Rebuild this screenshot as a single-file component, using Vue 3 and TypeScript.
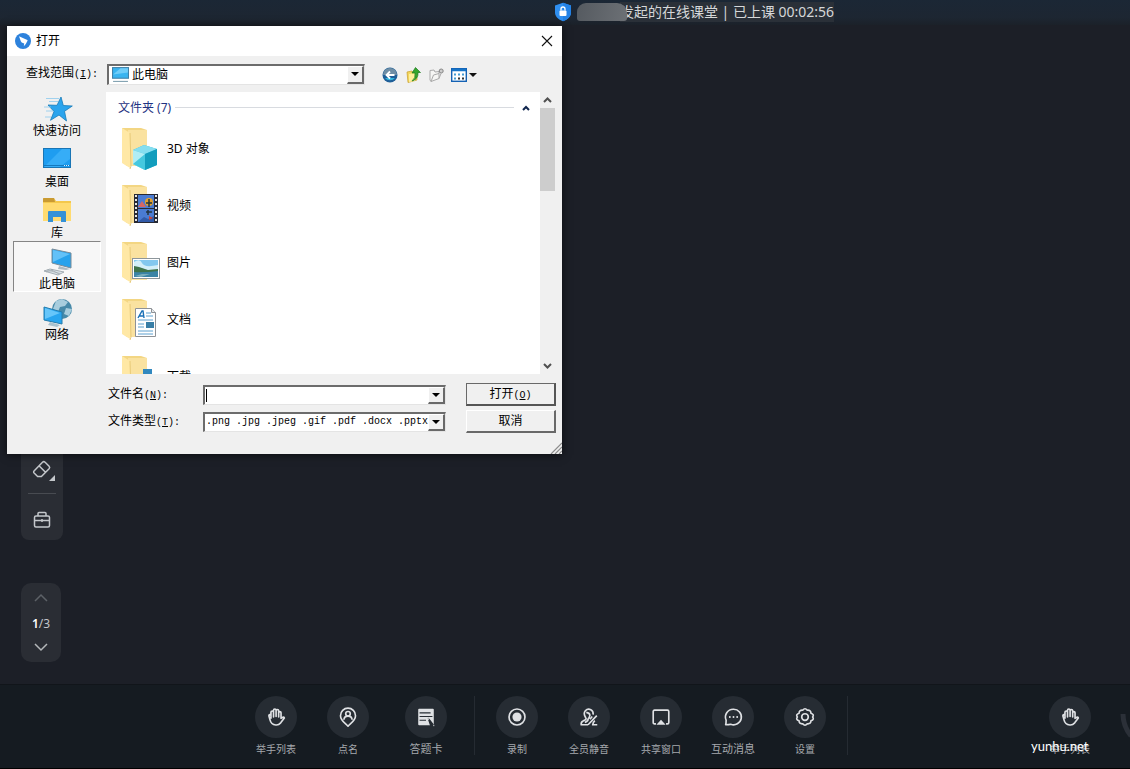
<script setup lang="ts">
import { ref } from 'vue'

interface Item { id: string; label: string; large?: boolean }

const places: Item[] = [
  { id: 'quick', label: '快速访问' },
  { id: 'desktop', label: '桌面' },
  { id: 'library', label: '库' },
  { id: 'pc', label: '此电脑' },
  { id: 'network', label: '网络' },
]
const folders: Item[] = [
  { id: 'objects', label: '3D 对象' },
  { id: 'video', label: '视频' },
  { id: 'picture', label: '图片' },
  { id: 'document', label: '文档' },
  { id: 'download', label: '下载' },
]
const groups: Item[][] = [
  [
    { id: 'hand', label: '举手列表' },
    { id: 'rollcall', label: '点名' },
    { id: 'card', label: '答题卡', large: true },
  ],
  [
    { id: 'record', label: '录制' },
    { id: 'mute', label: '全员静音' },
    { id: 'share', label: '共享窗口' },
    { id: 'chat', label: '互动消息', large: true },
    { id: 'settings', label: '设置' },
  ],
]
const activePlace = ref('pc')
const fileName = ref('')
</script>

<template>
  <div class="classroom">
    <header class="topbar">
      <svg class="shield" viewBox="0 0 18 20" aria-hidden="true">
        <path d="M9 .8 17 3.600v7c0 4-3.200 6.900-8 8.700-4.800-1.800-8-4.700-8-8.700v-7z" fill="#2f8ff0" />
        <path d="M9 .8 17 3.600v7c0 4-3.200 6.900-8 8.700z" fill="#2382e6" />
        <rect x="5.500" y="8.500" width="7" height="5.500" rx="1" fill="#fff" />
        <path d="M7 8.500V7a2 2 0 0 1 4 0v1.500" fill="none" stroke="#fff" stroke-width="1.300" />
      </svg>
      <span class="mask"></span>
      <h1 class="title">发起的在线课堂 | 已上课 00:02:56</h1>
    </header>

    <main class="stage">
      <div class="tools">
        <button class="tool" aria-label="橡皮擦">
          <svg viewBox="0 0 32 32" fill="none" stroke="#c4c7cb" stroke-width="1.500" stroke-linejoin="round">
            <path d="M8.500 17.500 16.500 9.200q1.300-1.200 2.600 0l4 4q1.200 1.300 0 2.600l-7.700 7.700h-3.800l-3.500-3.500q-1.100-1.200.4-2.500zM13 12.800l7 7" />
            <path d="M29 22v6h-6z" fill="#c4c7cb" stroke="none" />
          </svg>
        </button>
        <i class="rule"></i>
        <button class="tool" aria-label="工具箱">
          <svg viewBox="0 0 32 32" fill="none" stroke="#c4c7cb" stroke-width="1.500" stroke-linejoin="round">
            <rect x="8.500" y="12" width="15" height="11" rx="1.500" />
            <path d="M12 12V9.500q0-1 1-1h6q1 0 1 1V12M8.500 16.500h15M16 15v3" />
          </svg>
        </button>
      </div>
      <nav class="pager" aria-label="翻页">
        <button class="turn dim" aria-label="上一页"><svg viewBox="0 0 16 10"><path d="m2 8 6-6 6 6" /></svg></button>
        <span class="page"><b>1</b>/3</span>
        <button class="turn" aria-label="下一页"><svg viewBox="0 0 16 10"><path d="m2 2 6 6 6-6" /></svg></button>
      </nav>
    </main>

    <footer class="dock">
      <div v-for="(group, g) in groups" :key="g" class="group">
        <button v-for="item in group" :key="item.id" class="action" :class="[item.id, { large: item.large }]">
          <span class="disc">
            <svg viewBox="0 0 24 24" aria-hidden="true">
              <template v-if="item.id === 'hand'">
                <path d="M6.500 14V6.800a1.400 1.400 0 0 1 2.800 0V12 4.700a1.400 1.400 0 0 1 2.800 0V11.500 5.200a1.400 1.400 0 0 1 2.800 0V12 7.500a1.300 1.300 0 0 1 2.600 0V13.500l2-1.300q1.500-.7 1.600 1l-4 5.200q-2.200 2.600-5.300 2.300-5.300-.5-6.200-5.200L4.300 11q-.2-1.600 1.100-1.700 1 0 1.100 1.200" />
              </template>
              <template v-else-if="item.id === 'rollcall'">
                <path d="M12 22C9.500 19 3.800 16 3.800 10.500a8.200 8.200 0 0 1 16.400 0c0 5.500-5.700 8.500-8.200 11.500z" />
                <circle cx="12" cy="8.500" r="2.500" /><path d="M7.500 15q.3-4 4.500-4t4.500 4" />
              </template>
              <template v-else-if="item.id === 'card'">
                <rect x="3.500" y="3" width="17" height="18" rx="1" fill="currentColor" stroke="none" />
                <path d="M5 7.500h12M5 11.500h14M5 15.500h7" stroke="#262c33" stroke-width="1.200" />
                <path d="m14.500 13.500 7 9h-4z" fill="#262c33" stroke="#262c33" stroke-width="1.500" />
                <path d="m12.500 12.500 3 1.200-1.500 1.600zM20.500 20.500v1.500" stroke="#dfe1e4" stroke-width="1" />
              </template>
              <template v-else-if="item.id === 'record'">
                <circle cx="12" cy="12" r="8.700" /><circle cx="12" cy="12" r="5" fill="currentColor" stroke="none" />
              </template>
              <template v-else-if="item.id === 'mute'">
                <path d="M11 20.500H3.500q-.5-3 2-4.200l2.500-1.300q1.500-1 .3-2.500-2.800-4.300-.3-7.300Q10.500 2.500 14 4q3 1.500 2.500 5.500M9 7q3.500.5 4 3-.5 3-2 4 .5 2-3.500 4M20.500 10.500l-9.500 10M18.500 16q-2 1-2.500 4.500h5M15.500 11.500l-2.500 3" />
              </template>
              <template v-else-if="item.id === 'share'">
                <path d="M6.500 19.500H5q-1.500 0-1.500-1.500V6Q3.500 4.500 5 4.500h14q1.500 0 1.500 1.500v12q0 1.500-1.500 1.500h-1.500" /><path d="m12 15 5 5.500H7z" fill="currentColor" stroke="none" />
              </template>
              <template v-else-if="item.id === 'chat'">
                <path d="M12.500 3.500a8.500 8.500 0 1 1-3 16.400q-1.500.6-5.500.6.500-2 .5-5A8.500 8.500 0 0 1 12.500 3.500z" /><path d="M8.500 12h.1M12.500 12h.1M16.500 12h.1" stroke-linecap="round" stroke-width="2" />
              </template>
              <template v-else>
                <path d="M9.500 4.600Q12 1.500 14.500 4.600 18.500 4.200 18.500 7.900 22.500 9.500 20.300 12 22.500 14.500 18.500 16.100 18.500 19.800 14.500 19.400 12 22.500 9.500 19.400 5.500 19.800 5.500 16.100 1.500 14.500 3.700 12 1.500 9.500 5.500 7.900 5.500 4.200 9.500 4.600z" /><circle cx="12" cy="12" r="3.600" />
              </template>
            </svg>
          </span>
          <span class="caption">{{ item.label }}</span>
        </button>
      </div>
      <button class="action last">
        <span class="disc">
          <svg viewBox="0 0 24 24" aria-hidden="true">
            <path d="M6.500 14V6.800a1.400 1.400 0 0 1 2.800 0V12 4.700a1.400 1.400 0 0 1 2.800 0V11.500 5.200a1.400 1.400 0 0 1 2.800 0V12 7.500a1.300 1.300 0 0 1 2.600 0V13.500l2-1.300q1.500-.7 1.600 1l-4 5.200q-2.200 2.600-5.300 2.300-5.300-.5-6.200-5.200L4.300 11q-.2-1.600 1.100-1.700 1 0 1.100 1.200" />
          </svg>
        </span>
        <span class="caption">举手列表</span>
        <span class="watermark">yunhu.net</span>
      </button>
      <span class="edge"><svg viewBox="0 0 10 30"><path d="M3 4q0 12 8 22" fill="none" stroke="#2b3038" stroke-width="5" /></svg></span>
    </footer>

    <section class="dialog" role="dialog" aria-labelledby="dialog-title">
      <div class="titlebar">
        <svg class="brand" viewBox="0 0 16 16" aria-hidden="true"><circle cx="8" cy="8" r="8" fill="#2d82dc" /><path d="M4 3.200 12.300 7q.5.300.2.800L10.800 11l-2 2.200.4-2.700-2.500-1q-1-1-1.500-3z" fill="#fff" /></svg>
        <h2 id="dialog-title">打开</h2>
        <button class="close" aria-label="关闭"><svg viewBox="0 0 12 12"><path d="m1 1 10 10M11 1 1 11" stroke="#111" stroke-width="1.100" /></svg></button>
      </div>

      <div class="lookin">
        <label for="look">查找范围<span class="key">(<u>I</u>):</span></label>
        <div class="combo">
          <svg class="monitor" viewBox="0 0 16 16" aria-hidden="true"><rect x=".5" y="1.500" width="15" height="10" fill="#39b4f0" stroke="#4081a8" /><path d="m1 8 7-6h7v4z" fill="#70cdf8" /><path d="M1 14.500h14" stroke="#7d9eae" /></svg>
          <select id="look"><option>此电脑</option></select>
          <span class="drop"></span>
        </div>
        <div class="nav">
          <button aria-label="后退">
            <svg viewBox="0 0 16 16"><circle cx="8" cy="8" r="7.500" fill="#1f5f98" /><path d="M1 8a7 7 0 0 1 14 0z" fill="#6f8ea5" /><path d="M3 11a6 5 0 0 0 10 0z" fill="#35b8df" /><path d="M12.500 8H4.500M8 4.500 4.500 8 8 11.500" fill="none" stroke="#fff" stroke-width="1.800" /></svg>
          </button>
          <button aria-label="向上一级">
            <svg viewBox="0 0 16 16"><path d="m2 5 5-1 1 2 4-.5V13l-9 2.500z" fill="#f3d65c" stroke="#c79d2b" stroke-width=".7" /><path d="m4 7 6-1v8l-6 1z" fill="#ffef9b" /><path d="M7 14q4-3 3-8H7L10.500.5l5 5H13Q13.500 12 7 14z" fill="#35a52e" stroke="#1d7b1d" stroke-width=".7" /></svg>
          </button>
          <button aria-label="新建文件夹">
            <svg viewBox="0 0 16 16"><path d="M2 3.500 6 3l1 2 4-.5v7l-8 3-1-1.500zM3 14.500 5.500 8l5.500-1.500" fill="#f6f6f4" stroke="#aaa" /><path d="m11 11.500 2-5" stroke="#aaa" /><circle cx="13.200" cy="4" r="2" fill="#ccc" stroke="#858585" /></svg>
          </button>
          <button class="view" aria-label="查看菜单">
            <svg viewBox="0 0 26 16"><rect x=".7" y="1.700" width="14.600" height="12.600" fill="#fff" stroke="#1462b4" stroke-width="1.400" /><path d="M1 3h14" stroke="#1674c8" stroke-width="2.500" /><path d="M3 7.500h2M7 7.500h2M11 7.500h2M3 11.500h2" stroke="#439bd3" stroke-width="2" /><path d="M7 11.500h2M11 11.500h2" stroke="#333" stroke-width="2" /><path d="M18 6h8l-4 4z" fill="#111" /></svg>
          </button>
        </div>
      </div>

      <div class="browser">
        <nav class="places" aria-label="位置">
          <button v-for="place in places" :key="place.id" class="place" :class="{ active: place.id === activePlace }" @click="activePlace = place.id">
            <svg viewBox="0 0 32 30" aria-hidden="true">
              <template v-if="place.id === 'quick'">
                <path d="m20 3 2.300 8.500 9 .5-7.800 5.300L25.500 27 18 21l-8.500 5.300L13 17.500 7 11l9 .3z" fill="#2ba4ed" stroke="#167bb9" stroke-width=".8" />
                <path d="M5 4.500h13M8 7.500h9M3 13h7M5 17h7M4 23h6" stroke="#8bc9ed" stroke-width=".8" />
              </template>
              <template v-else-if="place.id === 'desktop'">
                <rect x="2.500" y="3.500" width="27" height="19" fill="#1e9df0" stroke="#1975b5" /><path d="M3 22 21 4h8v10L19 22z" fill="#36adf7" /><path d="M3 20.500h26" stroke="#1679be" /><path d="M23 20.500h5" stroke="#d7efff" stroke-dasharray="1" />
              </template>
              <template v-else-if="place.id === 'library'">
                <path d="M2 3q0-1 1-1h10l2 3h15v20H2z" fill="#f4c84c" /><path d="M2 3q0-1 1-1h10l1 4H2z" fill="#c99a32" /><path d="M2 7h28v18H2z" fill="#ffdb70" /><path d="M7 26V16q0-1 1-1h16q1 0 1 1v10h-5v-5h-8v5z" fill="#3491d6" />
              </template>
              <template v-else-if="place.id === 'pc'">
                <path d="m11 2 19 4v15l-19-5z" fill="#27a2ec" stroke="#7b8c98" /><path d="m12 3 17 4-17 8z" fill="#62c1f8" /><path d="m18 19-1 3 8 1 4-1" fill="#adbac2" /><path d="m3 24 6-2 14 3-6 3z" fill="#dce3e7" stroke="#929da5" stroke-width=".8" /><path d="m6 23 13 3.500M10 22.500 18 27M5 25l7-2" stroke="#8f999f" stroke-width=".5" />
              </template>
              <template v-else>
                <circle cx="21" cy="11" r="10" fill="#4789a8" /><path d="m15 3 6-2 6 3-3 4-5 1-2 5-5-3zM25 10l6 1-3 7-5-2z" fill="#a8cddd" /><path d="m3 9 18 5v12L3 22z" fill="#28a5ef" stroke="#247cac" /><path d="m4 10 15 5-15 6z" fill="#66c6fa" /><path d="m9 24-2 3 9 2 3-2" fill="#a9c2cf" />
              </template>
            </svg>
            <span>{{ place.label }}</span>
          </button>
        </nav>

        <div class="listing">
          <div class="files">
            <div class="heading"><span>文件夹 (7)</span><i></i><svg viewBox="0 0 10 8"><path d="m2 6 3-3 3 3" fill="none" stroke="#11264e" stroke-width="2" /></svg></div>
            <button v-for="folder in folders" :key="folder.id" class="folder">
              <svg viewBox="0 0 40 48" aria-hidden="true">
                <path d="M2 3h19l6 2v36H7L2 37z" fill="#f3d683" />
                <path d="M8 5h19v36H8z" fill="#fae2a0" />
                <path d="m2 3 8 5v35l-8-5z" fill="#ffe8a5" /><path d="m10 8 1 33-1 3" fill="none" stroke="#e8ca78" />
                <template v-if="folder.id === 'objects'">
                  <path d="m24 20 13 4v16l-12 5-12-6V25z" fill="#32bcd8" /><path d="m24 20 13 4-12 5-12-4z" fill="#85def0" /><path d="m13 25 12 4v16l-12-6z" fill="#b1edf5" /><path d="m25 29 12-5v16l-12 5z" fill="#129dbd" /><path d="m13 39 12-10v16z" fill="#45c8df" />
                </template>
                <template v-else-if="folder.id === 'video'">
                  <rect x="14" y="12" width="24" height="29" fill="#272934" /><path d="M18 13h16v13H18zM18 27h16v13H18z" fill="#4a7bd2" /><path d="M16 13v28M36 13v28" stroke="#e5e5e5" stroke-width="2" stroke-dasharray="2" /><circle cx="29" cy="20" r="4" fill="#e3a12c" /><path d="m18 25 4-6 4 6" fill="#d66663" /><path d="M29 17v8M26 21h6M28 28v5M26 30h6" stroke="#24343f" stroke-width="1.500" /><path d="m18 40 6-5 4 2 6-3v6z" fill="#315aa8" /><path d="m29 34 4 2-4 2z" fill="#c64638" />
                </template>
                <template v-else-if="folder.id === 'picture'">
                  <rect x="12.500" y="19.500" width="27" height="20" fill="#fff" stroke="#8d969b" /><path d="M14 21h24v11H14z" fill="#83c8ef" /><path d="M14 23q6-4 8 1t16 2v6H14z" fill="#d3eff9" /><path d="m14 27 5 1 9 3 10-1v4H14z" fill="#3f744b" /><path d="M14 33q9 1 24-1v6H14z" fill="#3b84a6" /><path d="m15 37 7-2 8 0-9 3z" fill="#7aaebc" />
                </template>
                <template v-else-if="folder.id === 'document'">
                  <path d="M15.500 12.500h16l4 4v24h-20z" fill="#fff" stroke="#8e9297" /><path d="M31.500 12.500v4h4" fill="#e5e9ec" stroke="#8e9297" /><path d="m18 22 4-7h1l1 7m-5-2h4" fill="none" stroke="#176fb6" stroke-width="1.400" /><path d="M26 17h5M26 20h7M18 24h15M18 28h6M18 31h6M18 35h15M18 38h15" stroke="#5da0cf" /><rect x="26" y="26" width="8" height="6" fill="#397ea6" />
                </template>
                <path v-else d="M23 16h9v10h5l-10 11-10-11h6z" fill="#3188bf" />
              </svg>
              <span>{{ folder.label }}</span>
            </button>
          </div>
          <div class="scroll" aria-hidden="true">
            <svg viewBox="0 0 15 16"><path d="m4 10 3.500-3.500L11 10" /></svg>
            <i class="thumb"></i>
            <svg viewBox="0 0 15 16"><path d="m4 6 3.500 3.500L11 6" /></svg>
          </div>
        </div>
      </div>

      <form class="fields" @submit.prevent>
        <label for="name">文件名<span class="key">(<u>N</u>):</span></label>
        <div class="combo"><input id="name" v-model="fileName" type="text" autocomplete="off"><i v-if="!fileName" class="caret"></i><span class="drop"></span></div>
        <button class="push primary" type="submit">打开<span class="key">(<u>O</u>)</span></button>
        <label for="type">文件类型<span class="key">(<u>T</u>):</span></label>
        <div class="combo"><select id="type"><option>.png .jpg .jpeg .gif .pdf .docx .pptx</option></select><span class="drop"></span></div>
        <button class="push" type="button">取消</button>
      </form>
      <svg class="grip" viewBox="0 0 12 12" aria-hidden="true"><path d="M1 12 12 1M5 12l7-7M9 12l3-3" stroke="#8c8c8c" stroke-width="1.200" /></svg>
    </section>
  </div>
</template>

<style>
body { margin: 0; background: #000; }
</style>

<style scoped>
* { box-sizing: border-box; }
button, input, select { font: inherit; color: inherit; margin: 0; padding: 0; border: 0; background: none; border-radius: 0; }
svg { display: block; flex: none; }
h1, h2 { margin: 0; font-weight: 400; }

.classroom { position: relative; min-height: 100vh; display: flex; flex-direction: column; overflow: hidden; background: #1c1f27; border-bottom: 1px solid #000; font: 12px/16px "Noto Sans", "Noto Sans CJK SC", sans-serif; }

.topbar { height: 25px; display: flex; justify-content: center; align-items: center; background: linear-gradient(#1b2735, #1d2632 70%, #1b2129); padding: 0 0 2px 258px; }
.shield { width: 18px; height: 20px; margin-right: 5px; }
.mask { position: relative; z-index: 1; width: 50px; height: 18px; border-radius: 9px 10px 3px 3px; background: linear-gradient(100deg, #555a60, #6c7075); }
.title { margin-left: -7px; font-size: 14px; line-height: 20px; color: #d5d7d9; background: #2a3038; white-space: nowrap; }

.stage { flex: 1; display: flex; flex-direction: column; justify-content: flex-end; align-items: flex-start; gap: 43px; padding: 0 21px 22px; }
.tools { width: 42px; display: flex; flex-direction: column; align-items: center; gap: 8px; padding: 8px 0 4px; border-radius: 8px; background: #2a2d34; }
.tool, .tool svg { width: 32px; height: 32px; }
.rule { width: 28px; height: 1px; margin-bottom: 2px; background: #484b51; }
.pager { width: 40px; height: 79px; display: flex; flex-direction: column; align-items: center; justify-content: space-between; padding: 10px 0; border-radius: 10px; background: #2a2d34; color: #c2c5c9; }
.turn svg { width: 16px; height: 10px; fill: none; stroke: #b4b7ba; stroke-width: 1.500; }
.turn.dim svg { stroke: #5d6167; }
.page { padding-top: 2px; }
.page b { color: #fff; font-weight: 600; }

.dock { position: relative; height: 84px; display: flex; align-items: flex-start; padding: 11px 24px 0 240px; background: #151b21; border-top: 1px solid #11151a; overflow: hidden; }
.group { display: flex; align-items: flex-start; height: 59px; border-right: 1px solid #252b32; padding-right: 6px; }
.group + .group { padding-left: 6px; }
.group:first-child { padding-right: 12px; }
.action { position: relative; width: 72px; display: flex; flex-direction: column; align-items: center; gap: 4px; color: #dfe1e4; }
.action.card { margin-left: 6px; }
.disc { width: 42px; height: 42px; display: grid; place-items: center; border-radius: 50%; background: #262c33; }
.disc svg { width: 22px; height: 22px; fill: none; stroke: currentColor; stroke-width: 1.800; stroke-linejoin: round; }
.caption { font-size: 10px; line-height: 14px; color: #a5a9ad; white-space: nowrap; }
.large .caption { font-size: 11px; }
.last { margin-left: auto; }
.watermark { position: absolute; left: -3px; top: 42px; font: 13px/16px Lato, "Noto Sans", sans-serif; color: #fff; }
.edge { position: absolute; right: 0; top: 25px; }
.edge svg { width: 10px; height: 30px; }

.dialog { position: absolute; left: 7px; top: 26px; width: 555px; background: #f0f0f0; color: #000; font: 12px/16px "Liberation Mono", "Noto Sans CJK SC", monospace; box-shadow: 0 1px 8px #0009; }
.titlebar { height: 30px; display: flex; align-items: center; gap: 5px; padding: 0 9px 0 8px; background: #fff; }
.brand { width: 16px; height: 16px; }
.titlebar h2 { font-size: 12px; padding-top: 2px; }
.close { margin-left: auto; }
.close svg { width: 12px; height: 12px; }

label { white-space: nowrap; }
.key { font-size: 10px; }
.lookin { height: 32px; display: flex; align-items: center; padding: 4px 0 0 19px; }
.lookin label { width: 81px; }
.combo { position: relative; display: flex; align-items: stretch; height: 20px; background: #fff; border: 1px solid #e4e4e4; border-top: 2px solid #6c6c6c; border-left: 2px solid #6c6c6c; }
.lookin .combo { width: 258px; height: 21px; align-items: center; }
.combo select, .combo input { flex: 1; width: 0; min-width: 0; appearance: none; outline: none; }
.lookin select { padding-top: 2px; }
.monitor { width: 17px; height: 17px; margin: 0 3px; }
.drop { width: 17px; align-self: stretch; display: grid; place-items: center; background: #f0f0f0; border: 1px solid #fff; border-right: 2px solid #696969; border-bottom: 2px solid #696969; pointer-events: none; }
.drop::after { content: ""; border: 4px solid transparent; border-top-color: #000; border-bottom: 0; }
.nav { display: flex; align-items: center; gap: 7px; margin-left: 17px; padding-top: 2px; }
.nav button, .nav svg { width: 16px; height: 16px; }
.nav .view, .nav .view svg { width: 26px; }

.browser { display: flex; gap: 5px; padding: 0 7px 0 6px; }
.places { width: 88px; }
.place { display: flex; flex-direction: column; align-items: center; width: 88px; height: 51px; padding-top: 5px; border: 1px solid transparent; }
.place svg { width: 32px; height: 30px; }
.active { background: #f7f7f7; border-color: #858585 #fff #fff #858585; }
.listing { flex: 1; display: flex; height: 282px; margin-top: 4px; background: #fff; font-family: "Noto Sans", "Noto Sans CJK SC", sans-serif; }
.files { flex: 1; overflow: hidden; }
.heading { height: 28px; display: flex; align-items: center; gap: 4px; padding: 3px 9px 0 12px; color: #1f3382; }
.heading i { flex: 1; height: 1px; background: #d8dbe0; }
.heading svg { width: 10px; height: 8px; margin-left: 3px; }
.folder { width: 100%; height: 57px; display: flex; align-items: center; gap: 7px; padding: 1px 0 0 14px; text-align: left; }
.folder svg { width: 40px; height: 48px; }
.scroll { width: 15px; display: flex; flex-direction: column; background: #f0f0f0; }
.scroll svg { width: 15px; height: 16px; fill: none; stroke: #505050; stroke-width: 2; }
.thumb { height: 83px; margin-bottom: auto; background: #cdcdcd; }

.fields { display: grid; grid-template-columns: 95px 1fr 90px; row-gap: 4px; align-items: center; padding: 9px 6px 21px 101px; }
.fields label { padding-top: 2px; }
.fields .combo { margin-right: 20px; }
.fields select { font-size: 10px; padding-left: 1px; }
.caret { position: absolute; left: 1px; top: 2px; width: 1px; height: 13px; background: #000; }
.push { height: 23px; padding-top: 2px; border: 1px solid #fff; border-right: 2px solid #696969; border-bottom: 2px solid #696969; }
.primary { border: 1px solid #696969; border-right: 2px solid #555; border-bottom: 2px solid #555; }
.grip { position: absolute; right: 0; bottom: 0; width: 12px; height: 12px; }
</style>
